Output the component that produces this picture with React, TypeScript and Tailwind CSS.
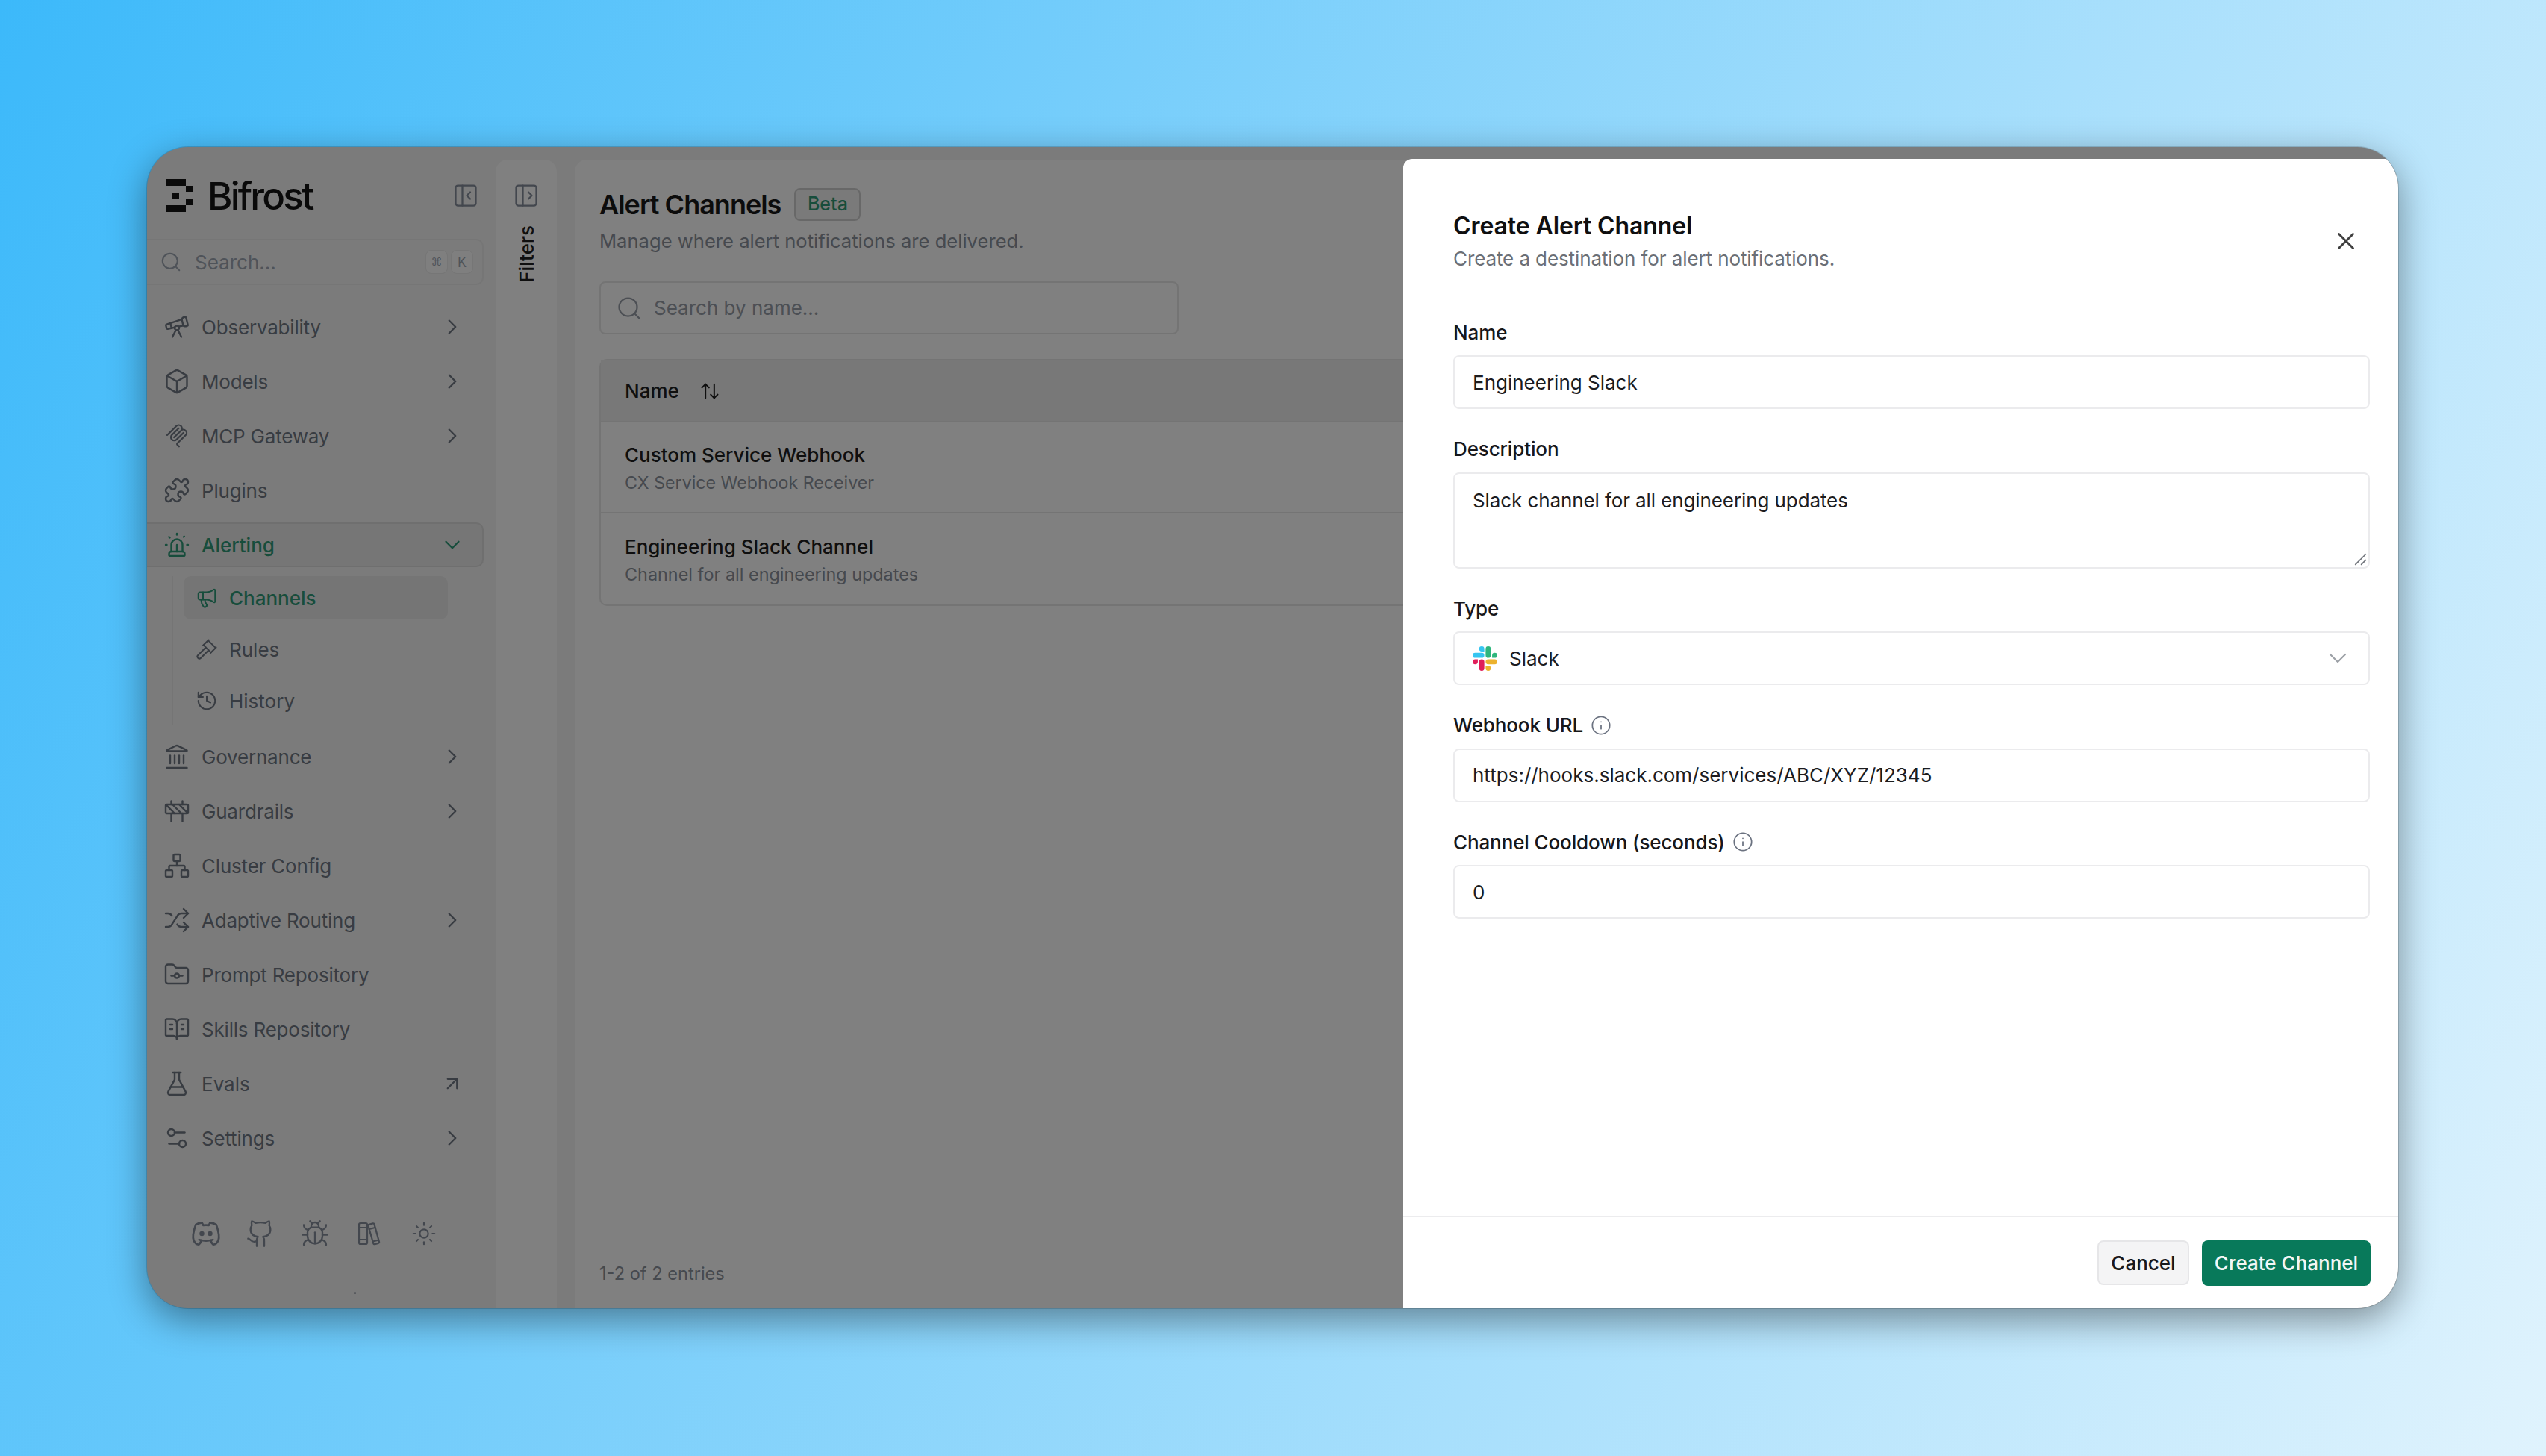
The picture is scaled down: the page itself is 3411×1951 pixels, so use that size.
import React from "react";
import {
  ArrowUpDown, ArrowUpRight, BookOpenText, Box, Bug, ChevronDown, ChevronRight, Construction, FlaskConical, FolderGit,
  Gavel, Github, History, Info, Landmark, Megaphone, Network, PanelLeftClose, PanelLeftOpen, Puzzle, Search,
  Settings2, Shuffle, Siren, Sun, Telescope, X,
} from "lucide-react";
import { TbBrandDiscord } from "react-icons/tb";

const McpIcon = ({ className }: { className?: string }) => (
  <svg viewBox="-2 -2 28 28" fill="currentColor" className={className}>
    <path d="M15.688 2.343a2.588 2.588 0 00-3.61 0l-9.626 9.44a.863.863 0 01-1.203 0 .823.823 0 010-1.18l9.626-9.44a4.313 4.313 0 016.016 0 4.116 4.116 0 011.204 3.54 4.3 4.3 0 013.609 1.18l.05.05a4.115 4.115 0 010 5.9l-8.706 8.537a.274.274 0 000 .393l1.788 1.754a.823.823 0 010 1.18.863.863 0 01-1.203 0l-1.788-1.753a1.92 1.92 0 010-2.754l8.706-8.538a2.47 2.47 0 000-3.54l-.05-.049a2.588 2.588 0 00-3.607-.003l-7.172 7.034-.002.002-.098.097a.863.863 0 01-1.204 0 .823.823 0 010-1.18l7.273-7.133a2.47 2.47 0 00-.003-3.537z" />
    <path d="M14.485 4.703a.823.823 0 000-1.18.863.863 0 00-1.204 0l-7.119 6.982a4.115 4.115 0 000 5.9 4.314 4.314 0 006.016 0l7.12-6.982a.823.823 0 000-1.18.863.863 0 00-1.204 0l-7.119 6.982a2.588 2.588 0 01-3.61 0 2.47 2.47 0 010-3.54l7.12-6.982z" />
  </svg>
);

const SlackIcon = () => (
  <svg viewBox="0 0 24 24" className="w-[33px] h-[33px] shrink-0">
    <path fill="#E01E5A" d="M5.042 15.165a2.528 2.528 0 0 1-2.52 2.523A2.528 2.528 0 0 1 0 15.165a2.527 2.527 0 0 1 2.522-2.52h2.52v2.52zM6.313 15.165a2.527 2.527 0 0 1 2.521-2.52 2.527 2.527 0 0 1 2.521 2.52v6.313A2.528 2.528 0 0 1 8.834 24a2.528 2.528 0 0 1-2.521-2.522v-6.313z" />
    <path fill="#36C5F0" d="M8.834 5.042a2.528 2.528 0 0 1-2.521-2.52A2.528 2.528 0 0 1 8.834 0a2.528 2.528 0 0 1 2.521 2.522v2.52H8.834zM8.834 6.313a2.528 2.528 0 0 1 2.521 2.521 2.528 2.528 0 0 1-2.521 2.521H2.522A2.528 2.528 0 0 1 0 8.834a2.528 2.528 0 0 1 2.522-2.521h6.312z" />
    <path fill="#2EB67D" d="M18.956 8.834a2.528 2.528 0 0 1 2.522-2.521A2.528 2.528 0 0 1 24 8.834a2.528 2.528 0 0 1-2.522 2.521h-2.522V8.834zM17.688 8.834a2.528 2.528 0 0 1-2.523 2.521 2.527 2.527 0 0 1-2.52-2.521V2.522A2.527 2.527 0 0 1 15.165 0a2.528 2.528 0 0 1 2.523 2.522v6.312z" />
    <path fill="#ECB22E" d="M15.165 18.956a2.528 2.528 0 0 1 2.523 2.522A2.528 2.528 0 0 1 15.165 24a2.527 2.527 0 0 1-2.52-2.522v-2.522h2.52zM15.165 17.688a2.527 2.527 0 0 1-2.52-2.523 2.526 2.526 0 0 1 2.52-2.52h6.313A2.527 2.527 0 0 1 24 15.165a2.528 2.528 0 0 1-2.522 2.523h-6.313z" />
  </svg>
);

const BifrostMark = () => (
  <svg viewBox="0 0 36 44" fill="currentColor" className="w-[36px] h-[44px] shrink-0">
    <rect x="0" y="0" width="27" height="9" />
    <rect x="27" y="9" width="9" height="8" />
    <rect x="9" y="18" width="9" height="8" />
    <rect x="27" y="27" width="9" height="8" />
    <rect x="0" y="35" width="27" height="9" />
  </svg>
);

// two books, the right one leaning
const BooksIcon = ({ className }: { className?: string }) => (
  <svg viewBox="0 0 34 34" fill="none" stroke="currentColor" strokeWidth="2.2" strokeLinejoin="round" strokeLinecap="round" className={className}>
    <rect x="3" y="3" width="11" height="28" rx="2" />
    <path d="M3 9h11M3 25h11" />
    <path d="M15 5.2 21.5 3.4a1.6 1.6 0 0 1 2 1.2L30 28a1.6 1.6 0 0 1-1.2 2l-4.6 1.2a1.6 1.6 0 0 1-2-1.2L15 5.2Z" />
    <path d="M16.6 11 24.5 9M21.6 27.5l7-1.8" />
  </svg>
);

const iconCls = "w-[36px] h-[36px] shrink-0 stroke-[1.6]";

const topItems = [
  { label: "Observability", icon: Telescope, more: true },
  { label: "Models", icon: Box, more: true },
  { label: "MCP Gateway", icon: McpIcon, more: true },
  { label: "Plugins", icon: Puzzle, more: false },
];

const lowerItems = [
  { label: "Governance", icon: Landmark, more: true },
  { label: "Guardrails", icon: Construction, more: true },
  { label: "Cluster Config", icon: Network, more: false },
  { label: "Adaptive Routing", icon: Shuffle, more: true },
  { label: "Prompt Repository", icon: FolderGit, more: false },
  { label: "Skills Repository", icon: BookOpenText, more: false },
];

const NavItem = ({ label, icon: Icon, more }: { label: string; icon: React.ElementType; more?: boolean }) => (
  <div className="h-[60px] flex items-center pl-[22px] pr-[25px] gap-[15px] text-[#383c42]">
    <Icon className={iconCls} />
    <span className="flex-1 text-[26px] tracking-[-0.2px]">{label}</span>
    {more && <ChevronRight className="w-[34px] h-[34px] stroke-[1.6]" />}
  </div>
);

const Field = ({ label, info, children }: { label: string; info?: boolean; children: React.ReactNode }) => (
  <div className="flex flex-col gap-[16px]">
    <div className="h-[30px] flex items-center gap-[10px] text-[26px] font-medium text-[#17171a] tracking-[-0.12px]">
      {label}
      {info && <Info className="w-[28px] h-[28px] text-[#6b7280] stroke-[1.5]" />}
    </div>
    {children}
  </div>
);

const inputCls = "h-[72px] px-[24px] flex items-center border-2 border-[#ebebed] rounded-[8px] bg-white text-[26px] text-[#1c1c1f]";

export default function App() {
  return (
    <div className="w-[3411px] h-[1951px] pl-[197px] pt-[197px] overflow-hidden font-['Inter',sans-serif] bg-[linear-gradient(115deg,#3cb9fa,#e0f3fd)]">
      <div className="relative w-[3016px] h-[1556px] flex rounded-[55px] overflow-hidden bg-[#7b7b7b] shadow-[0_15px_50px_rgba(0,0,0,0.42)] ring-1 ring-black/15">
        {/* Sidebar */}
        <aside className="relative w-[467px] shrink-0 flex flex-col pt-[43px] pr-[16px]">
          <div className="h-[44px] flex items-center pl-[25px] pr-[6px] text-[#0a0a0a]">
            <BifrostMark />
            <span className="ml-[20px] flex-1 text-[51px] font-medium tracking-[-2.8px] leading-none">Bifrost</span>
            <PanelLeftClose className="w-[36px] h-[36px] text-[#43474e] stroke-[1.5]" />
          </div>
          <div className="mt-[36px] -ml-[10px] h-[62px] flex items-center pl-[25px] pr-[12px] border-2 border-[#767676] rounded-[10px] text-[#4f5359]">
            <Search className="w-[30px] h-[30px] stroke-[1.6]" />
            <span className="ml-[17px] flex-1 text-[26px]">Search...</span>
            <span className="w-[30px] h-[32px] flex items-center justify-center rounded-[8px] border border-[#767676] bg-[#7f7f7f] text-[15px]">⌘</span>
            <span className="ml-[4px] w-[30px] h-[32px] flex items-center justify-center rounded-[8px] border border-[#767676] bg-[#7f7f7f] text-[18px]">K</span>
          </div>
          <nav className="mt-[26px] flex flex-col gap-[13px]">
            {topItems.map((item) => (
              <NavItem key={item.label} {...item} />
            ))}
            <div className="-ml-[10px] h-[60px] flex items-center pl-[30px] pr-[23px] gap-[15px] border-2 border-[#6f6f6f] rounded-[10px] bg-[#767676] text-[#174d3c]">
              <Siren className={iconCls} />
              <span className="flex-1 text-[26px] font-medium">Alerting</span>
              <ChevronDown className="w-[34px] h-[34px] stroke-[1.6]" />
            </div>
          </nav>
          <div className="mt-[12px] ml-[33px] pl-[14px] pr-[48px] pb-[3px] flex flex-col gap-[11px] border-l-2 border-[#757575]">
            <div className="h-[58px] flex items-center pl-[16px] gap-[15px] rounded-[10px] bg-[#757575] text-[#174d3c]">
              <Megaphone className="w-[30px] h-[30px] stroke-[1.6]" />
              <span className="text-[26px] font-medium">Channels</span>
            </div>
            <div className="h-[58px] flex items-center pl-[16px] gap-[15px] text-[#383c42]">
              <Gavel className="w-[30px] h-[30px] stroke-[1.6]" />
              <span className="text-[26px]">Rules</span>
            </div>
            <div className="h-[58px] flex items-center pl-[16px] gap-[15px] text-[#383c42]">
              <History className="w-[30px] h-[30px] stroke-[1.6]" />
              <span className="text-[26px]">History</span>
            </div>
          </div>
          <div className="mt-[13px] flex flex-col gap-[13px]">
            {lowerItems.map((item) => (
              <NavItem key={item.label} {...item} />
            ))}
            <div className="h-[60px] flex items-center pl-[22px] pr-[27px] gap-[15px] text-[#383c42]">
              <FlaskConical className={iconCls} />
              <span className="flex-1 text-[26px]">Evals</span>
              <ArrowUpRight className="w-[30px] h-[30px] stroke-[1.8]" />
            </div>
            <NavItem label="Settings" icon={Settings2} more />
          </div>
          <div className="mt-auto mb-[78px] pl-[57px] flex items-center gap-[29px] text-[#43474e] [&>span]:w-[44px] [&>span]:h-[44px] [&>span]:flex [&>span]:items-center [&>span]:justify-center">
            <span><TbBrandDiscord className="w-[44px] h-[44px] stroke-[1.5]" /></span>
            <span><Github className="w-[40px] h-[40px] stroke-[1.4]" /></span>
            <span><Bug className="w-[40px] h-[40px] stroke-[1.4]" /></span>
            <span><BooksIcon className="w-[34px] h-[34px]" /></span>
            <span><Sun className="w-[34px] h-[34px] stroke-[1.5]" /></span>
          </div>
          <span className="absolute left-[277px] bottom-[19px] w-[3px] h-[3px] rounded-full bg-[#43474e]" />
        </aside>

        {/* Filters rail */}
        <div className="mt-[17px] w-[82px] shrink-0 flex flex-col items-center pt-[30px] rounded-t-[16px] bg-[#808080] text-[#0f0f0f]">
          <PanelLeftOpen className="w-[36px] h-[36px] text-[#43474e] stroke-[1.5]" />
          <span className="mt-[22px] text-[26px] font-medium [writing-mode:vertical-rl] rotate-180">Filters</span>
        </div>

        {/* Main panel */}
        <main className="ml-[24px] mt-[17px] flex-1 flex flex-col pt-[38px] pl-[33px] pr-[33px] pb-[31px] rounded-t-[16px] bg-[#808080]">
          <div className="flex items-center gap-[18px]">
            <h1 className="text-[36px] leading-[44px] font-semibold tracking-[-1px] text-[#0c0c0c]">Alert Channels</h1>
            <span className="h-[44px] w-[89px] flex items-center justify-center border-2 border-[#686868] rounded-[8px] bg-[#7a7a7a] text-[25px] font-medium text-[#174d3c]">Beta</span>
          </div>
          <p className="mt-[12px] text-[25.6px] leading-[30px] text-[#46494e]">Manage where alert notifications are delivered.</p>
          <div className="mt-[39px] w-[776px] h-[71px] flex items-center pl-[20px] gap-[15px] border-2 border-[#747474] rounded-[8px] text-[#4c4f54]">
            <Search className="w-[36px] h-[36px] stroke-[1.5]" />
            <span className="text-[26px]">Search by name...</span>
          </div>
          <div className="mt-[33px] border-2 border-[#747474] rounded-[10px]">
            <div className="h-[83px] flex items-center px-[32px] gap-[27px] bg-[#787878] border-b-2 border-[#747474] text-[#0f0f0f]">
              <span className="text-[26px] font-medium">Name</span>
              <ArrowUpDown className="w-[28px] h-[28px] stroke-[1.7]" />
            </div>
            <div className="h-[122px] flex flex-col justify-center pt-[3px] px-[32px] gap-[6px] border-b-2 border-[#747474]">
              <span className="text-[26px] leading-[32px] font-medium text-[#0f0f0f]">Custom Service Webhook</span>
              <span className="text-[23.2px] leading-[30px] text-[#46494e]">CX Service Webhook Receiver</span>
            </div>
            <div className="h-[122px] flex flex-col justify-center pt-[3px] px-[32px] gap-[6px]">
              <span className="text-[26px] leading-[32px] font-medium text-[#0f0f0f]">Engineering Slack Channel</span>
              <span className="text-[23.4px] leading-[30px] text-[#46494e]">Channel for all engineering updates</span>
            </div>
          </div>
          <p className="mt-auto text-[23.6px] leading-[30px] text-[#46494e]">1-2 of 2 entries</p>
        </main>

        {/* Sheet */}
        <section className="absolute top-[16px] right-0 bottom-0 w-[1333px] flex flex-col rounded-tl-[12px] bg-white">
          <button className="absolute top-[91px] right-[51px] text-[#404040]">
            <X className="w-[38px] h-[38px] stroke-[1.8]" />
          </button>
          <div className="flex-1 pt-[70px] pl-[67px] pr-[38px]">
            <h2 className="text-[32px] leading-[40px] font-semibold tracking-[-0.1px] text-[#0f0f10]">Create Alert Channel</h2>
            <p className="mt-[9px] text-[26px] leading-[30px] text-[#6b6f76] tracking-[-0.1px]">Create a destination for alert notifications.</p>
            <div className="mt-[68px] flex flex-col gap-[38.5px]">
              <Field label="Name">
                <div className={inputCls}>Engineering Slack</div>
              </Field>
              <Field label="Description">
                <div className="relative h-[129px] px-[24px] pt-[20px] border-2 border-[#ebebed] rounded-[8px] text-[26px] leading-[32px] text-[#1c1c1f] tracking-[-0.1px]">
                  Slack channel for all engineering updates
                  <svg viewBox="0 0 16 16" className="absolute right-[2px] bottom-[2px] w-[18px] h-[18px] text-[#6b6f76]" stroke="currentColor" strokeWidth="1.4">
                    <path d="M2 15 15 2M9 15l6-6" />
                  </svg>
                </div>
              </Field>
              <Field label="Type">
                <div className="h-[72px] pl-[24px] pr-[21px] flex items-center gap-[16px] border-2 border-[#ebebed] rounded-[8px] text-[26px] text-[#1c1c1f]">
                  <SlackIcon />
                  <span className="flex-1">Slack</span>
                  <ChevronDown className="w-[40px] h-[40px] text-[#9ca0a6] stroke-[1.3]" />
                </div>
              </Field>
              <Field label="Webhook URL" info>
                <div className={inputCls}>https://hooks.slack.com/services/ABC/XYZ/12345</div>
              </Field>
              <Field label="Channel Cooldown (seconds)" info>
                <div className={inputCls}>0</div>
              </Field>
            </div>
          </div>
          <div className="h-[124px] flex items-center justify-end gap-[17px] pr-[37px] border-t-2 border-[#ececee]">
            <button className="w-[123px] h-[60px] rounded-[8px] border-2 border-[#e6e6e8] bg-[#f4f4f5] text-[26px] font-medium text-[#18181b]">Cancel</button>
            <button className="w-[226px] h-[61px] rounded-[8px] bg-[#08795a] text-[26px] font-medium text-[#f2f7f5]">Create Channel</button>
          </div>
        </section>
      </div>
    </div>
  );
}
